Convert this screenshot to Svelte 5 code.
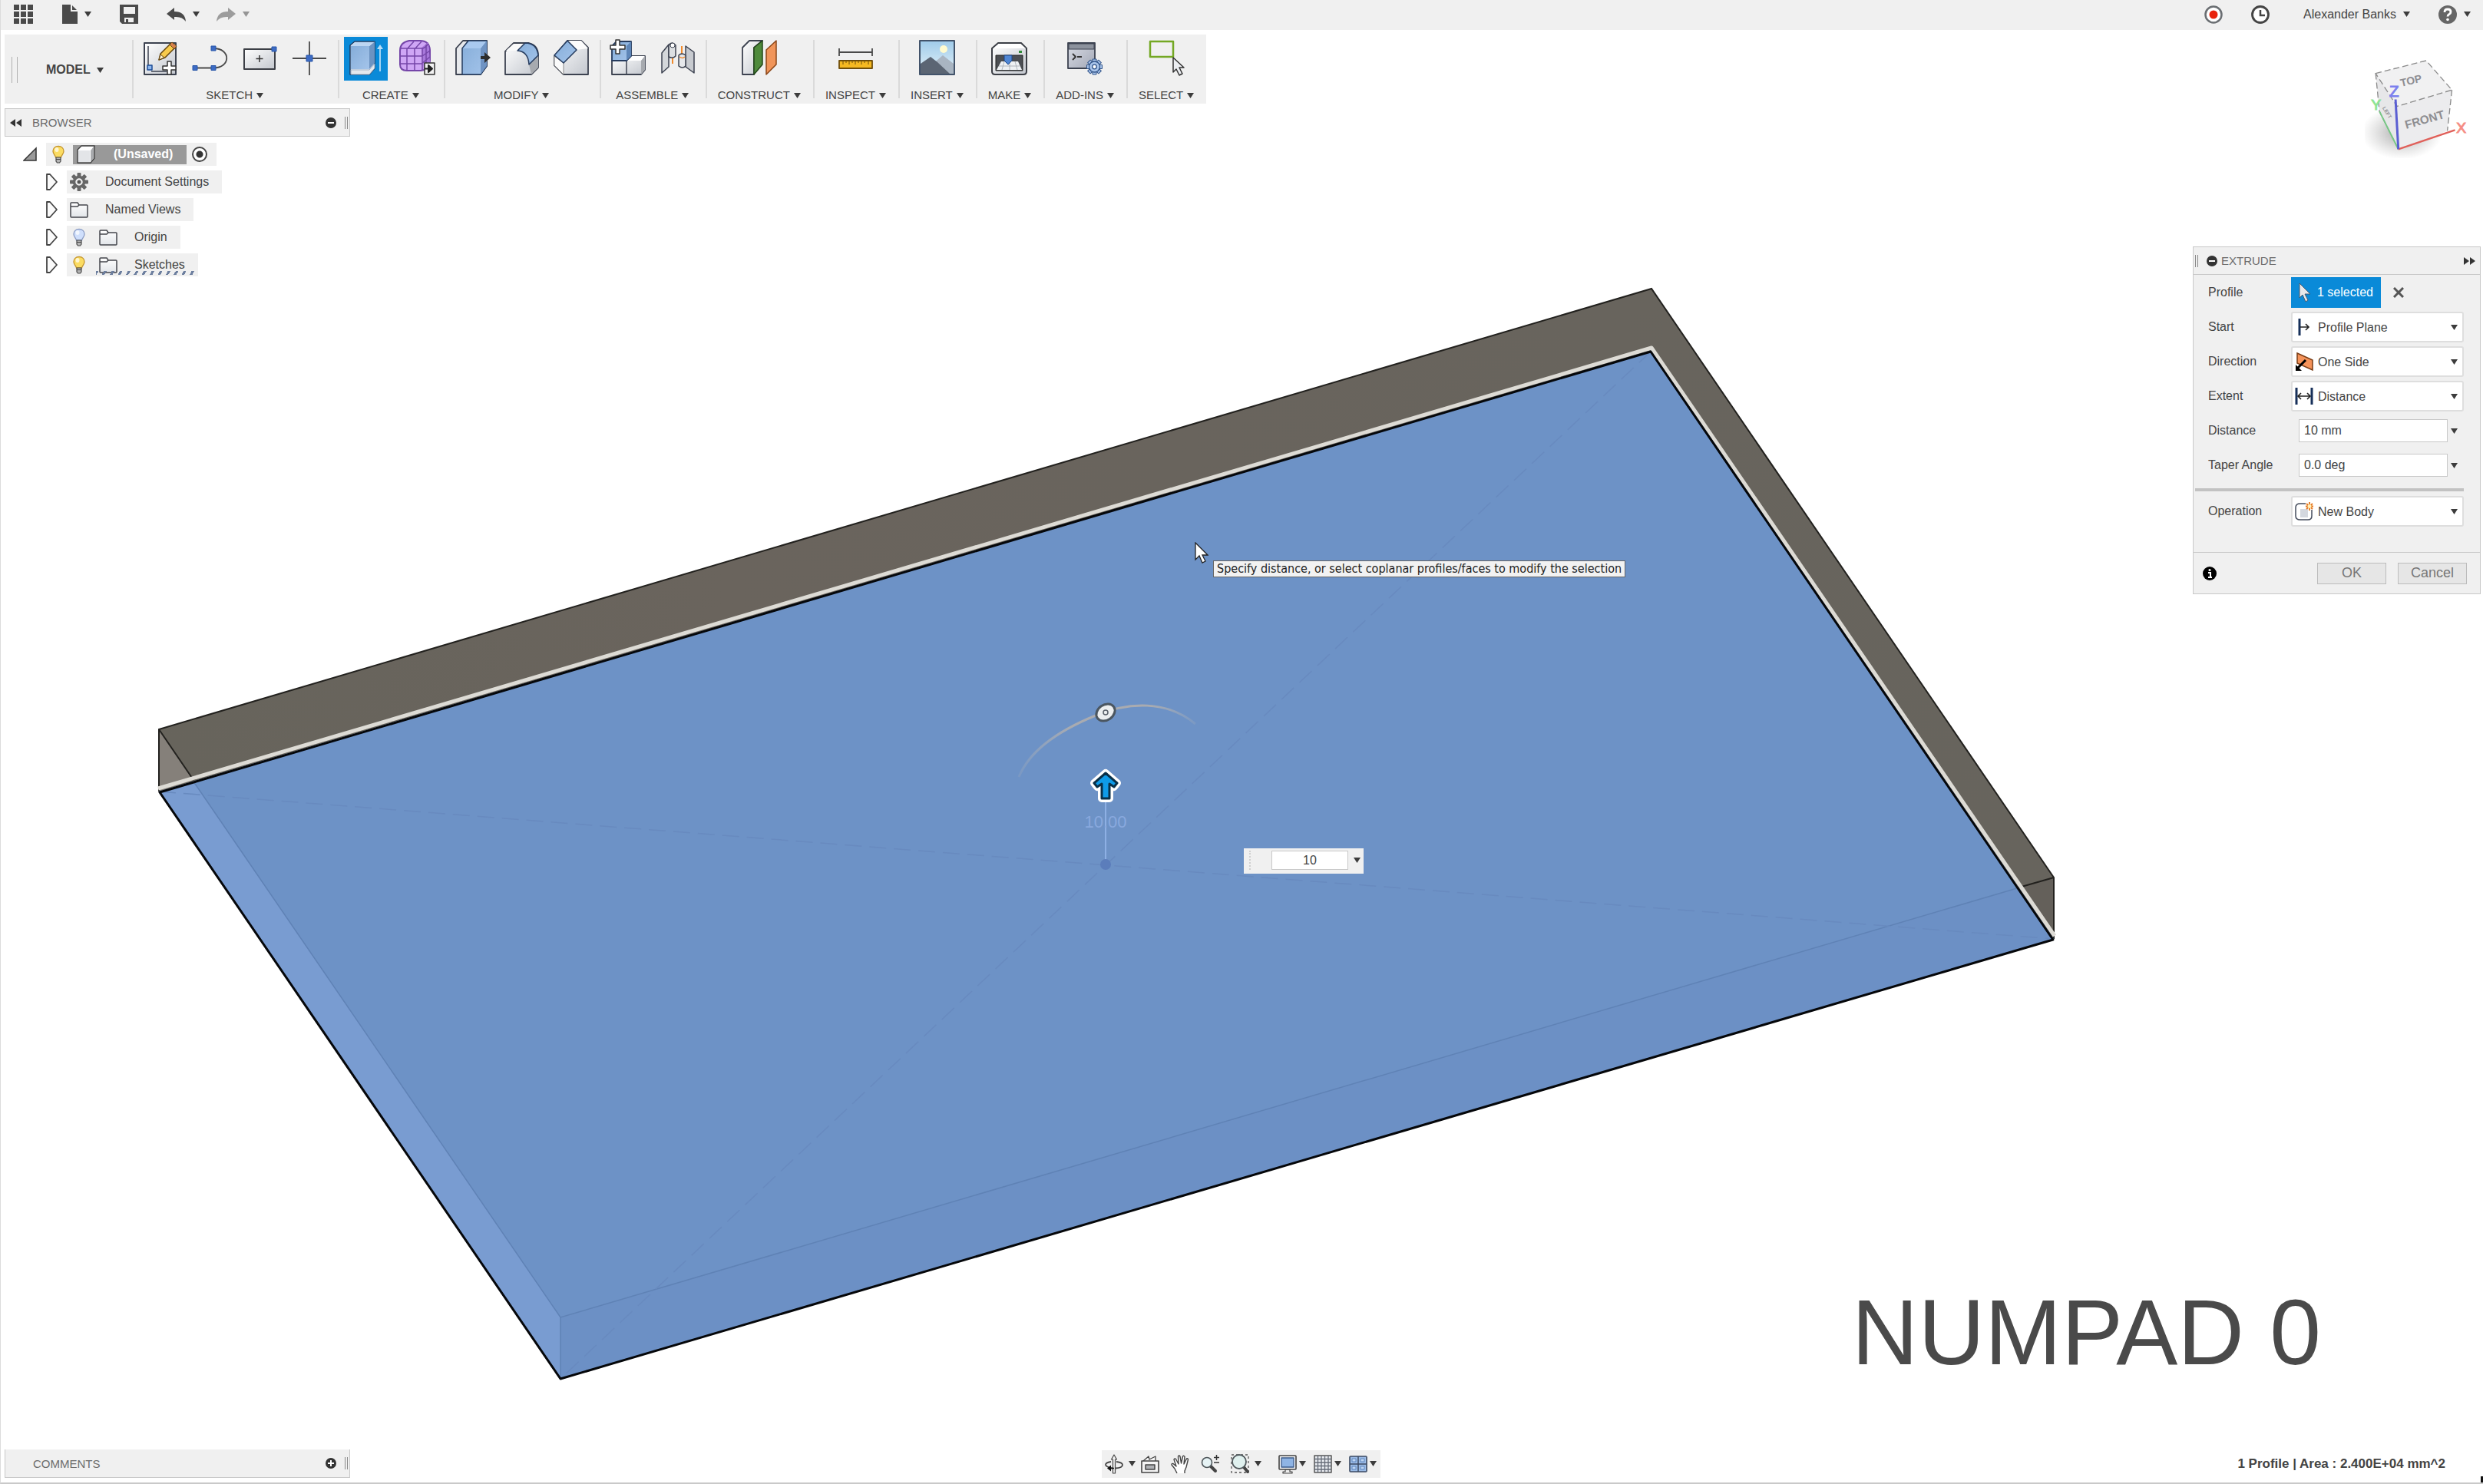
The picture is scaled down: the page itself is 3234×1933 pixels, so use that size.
<script>
  const groups = [
    { label: "SKETCH", tools: ["newSketch", "line", "rectangle", "point"] },
    { label: "CREATE", tools: ["extrude", "form"] },
    { label: "MODIFY", tools: ["pressPull", "fillet", "chamfer"] },
    { label: "ASSEMBLE", tools: ["component", "joint"] },
    { label: "CONSTRUCT", tools: ["plane"] },
    { label: "INSPECT", tools: ["measure"] },
    { label: "INSERT", tools: ["decal"] },
    { label: "MAKE", tools: ["print"] },
    { label: "ADD-INS", tools: ["scripts"] },
    { label: "SELECT", tools: ["select"] },
  ];

  const nodes = [
    { label: "Document Settings", icon: "gear" },
    { label: "Named Views", icon: "folder" },
    { label: "Origin", icon: "folder", bulb: "off" },
    { label: "Sketches", icon: "folder", bulb: "on", dashed: true },
  ];

  const navTools = [
    { name: "orbit", menu: true },
    { name: "lookAt" },
    { name: "pan" },
    { name: "zoom" },
    { name: "fit", menu: true },
    { name: "display", menu: true, compact: true },
    { name: "grid", menu: true, compact: true },
    { name: "viewports", menu: true, compact: true },
  ];

  const teeth = [0, 45, 90, 135, 180, 225, 270, 315];

  let activeTool = $state("extrude");
  let start = $state("Profile Plane");
  let direction = $state("One Side");
  let extent = $state("Distance");
  let operation = $state("New Body");
  let distance = $state("10 mm");
  let taper = $state("0.0 deg");
  let quickValue = $state("10");
</script>

{#snippet caret()}
  <svg class="caret" viewBox="0 0 9 7" aria-hidden="true"><path d="M0 0h9L4.500 7z" /></svg>
{/snippet}

{#snippet bulb(state)}
  <svg class="node-icon" viewBox="0 0 24 24" aria-hidden="true">
    <path d="M12 1.500c-4.500 0-7 3-7 6.500 0 3.500 3 5 3.500 8h7c.5-3 3.500-4.500 3.500-8 0-3.500-2.500-6.500-7-6.500z" fill={state === "on" ? "#fbdc62" : "#cfdffc"} stroke={state === "on" ? "#c4942c" : "#8b9cc4"} stroke-width="1.300" />
    <ellipse cx="10" cy="6" rx="2.500" ry="3" fill="#fff" opacity=".7" />
    <path d="M9 16h6v5l-1.500 2h-3L9 21z" fill="#b5b5b5" stroke="#4a4a4a" stroke-width="1.200" />
    <path d="M9 18.500h6" stroke="#444" />
  </svg>
{/snippet}

{#snippet nodeIcon(name)}
  <svg class="node-icon" viewBox="0 0 24 24" aria-hidden="true">
    {#if name === "gear"}
      {#each teeth as angle}
        <rect x="9.500" y="0" width="5" height="7" rx="1" fill="#666" transform="rotate({angle} 12 12)" />
      {/each}
      <circle cx="12" cy="12" r="6.500" fill="none" stroke="#666" stroke-width="3.500" />
      <circle cx="12" cy="12" r="2.500" fill="#555" />
    {:else if name === "folder"}
      <path d="M1 21V4q0-1 1-1h8l2 3h10q1 0 1 1v14q0 1-1 1H2q-1 0-1-1z" fill="url(#paper)" stroke="#44464c" stroke-width="1.500" />
      <path d="M1 8h9l2-2" fill="none" stroke="#44464c" stroke-width="1.500" />
    {:else}
      <path d="M1 6l5-5h17v16l-5 6H1z" fill="#fff" stroke="#444" stroke-width="1.500" stroke-linejoin="round" />
      <path d="M2 7h15v15H2z" fill="#e3e5e8" />
      <path d="M18 7l4-5v15l-4 5z" fill="#a9abae" />
    {/if}
  </svg>
{/snippet}

{#snippet toolIcon(name)}
  <svg viewBox="0 0 57 57" aria-hidden="true" stroke-linejoin="round">
    {#if name === "newSketch"}
      <rect x="8" y="8" width="41" height="41" fill="url(#steel)" stroke="#3c4250" stroke-width="2" />
      <path d="M13 12v28M17 45h20" stroke="#3c4250" stroke-width="1.500" />
      <rect x="12" y="37" width="6" height="6" fill="#8db7ee" stroke="#1d4c96" stroke-width="1.500" />
      <path d="M27 30l2-8L43 8l6 5-14 14z" fill="#f8cb4c" stroke="#65460e" stroke-width="1.500" />
      <path d="M41 10l3-3 6 5-3 4z" fill="#d8814d" stroke="#65460e" />
      <path d="M27 30l2-7 5 4z" fill="#fff2cf" stroke="#65460e" />
      <path d="M38 32h5v6h6v5h-6v6h-5v-6h-6v-5h6z" fill="#fff" stroke="#333" stroke-width="1.500" />
    {:else if name === "line"}
      <path d="M9 40.500h24c23 0 23-25.500 0-25.500" fill="none" stroke="#4a4a4a" stroke-width="1.800" />
      <path d="M30 12h6v6h-6zM30 37.500h6v6h-6zM6 37.500h6v6H6z" fill="#3c6bc4" stroke="#2856a8" />
    {:else if name === "rectangle"}
      <rect x="8" y="16" width="40" height="26" fill="url(#steel)" stroke="#3c3f46" stroke-width="2" />
      <path d="M28 24v9M23.500 28.500h9" stroke="#333" stroke-width="1.500" />
      <rect x="44" y="13" width="6" height="6" fill="#3c6bc4" stroke="#2856a8" />
    {:else if name === "point"}
      <path d="M28 6v44M6 28h44" stroke="#4a4a4a" stroke-width="1.800" />
      <rect x="24" y="24" width="8" height="8" fill="#3c6bc4" stroke="#2856a8" />
    {:else if name === "extrude"}
      <path d="M8 11l6-5h26v35l-7 8H8z" fill="#dfeaf6" stroke="#1d3c63" stroke-width="1.500" />
      <path d="M9 12h24v30H9z" fill="url(#blue)" />
      <path d="M33 12l7-6v28l-7 8z" fill="#6d93c1" />
      <path d="M9 12l6-5h24l-6 5z" fill="#bdd6f2" />
      <path d="M9 43h24l7-8v6l-7 8H9z" fill="#e4e8ed" stroke="#93a5ba" stroke-width=".8" />
      <path d="M47 45V15" stroke="#b6ddf7" stroke-width="1.800" />
      <path d="M43 16l4-6 4 6z" fill="#b6ddf7" />
    {:else if name === "form"}
      <path d="M8 18Q8 7 20 5h14q12 0 13 12v14q-1 12-12 13H17q-9 0-9-8z" fill="#cfa6f5" stroke="#7546a8" stroke-width="2" />
      <path d="M36 14l9-7 2 26-8 9z" fill="#a878db" />
      <path d="M9 15h28q3 0 8-6M8 25h29l10-7M8 35h28l11-9M17 44V16l9-10M27 44V16l9-10M37 43V15M42 38V10" fill="none" stroke="#7546a8" stroke-width="1.500" />
      <rect x="40" y="34" width="13" height="15" fill="#f3f3f3" stroke="#333" stroke-width="1.500" />
      <path d="M40 41.500h5M45 37l5 4.500-5 4.500z" fill="#222" stroke="#222" stroke-width="2" />
    {:else if name === "pressPull"}
      <path d="M8 15L17 5h31v33L40 49H8z" fill="#e7e9ec" stroke="#3c4250" stroke-width="1.800" />
      <path d="M16 15l8-10h24v33L40 49H16z" fill="url(#blue)" stroke="#253b5e" stroke-width="1.500" />
      <path d="M40 15l8-10v33l-8 11z" fill="#6e93c3" />
      <path d="M17 15l8-9h22l-7 9z" fill="#a9c9ef" />
      <path d="M40 25h5v-5l8 7-8 7v-5h-5z" fill="#2d2d2d" />
    {:else if name === "fillet"}
      <path d="M7 19L18 8h20q12 3 12 16v16l-9 9H7z" fill="url(#steel)" stroke="#3c4250" stroke-width="1.800" />
      <path d="M38 36l12-12v16l-9 9z" fill="#a7aaaf" />
      <path d="M8 18L18 9h14l-9 9z" fill="#fafafa" />
      <path d="M23 18L33 8q15 0 17 16L38 36Q37 19 23 18z" fill="url(#blue)" stroke="#253b5e" stroke-width="1.500" />
    {:else if name === "chamfer"}
      <path d="M6 25L23 5h18l9 9v35H18L6 37z" fill="url(#steel)" stroke="#3c4250" stroke-width="1.800" />
      <path d="M23 5h18l9 10-15 2z" fill="#fcfcfc" />
      <path d="M6 25l12 9v15L6 37z" fill="#fafafa" stroke="#888" />
      <path d="M23 5l12 12-17 17L6 24z" fill="url(#blue)" stroke="#253b5e" stroke-width="1.500" />
    {:else if name === "component"}
      <path d="M8 31h19l5-6h19v18l-5 6H8z" fill="url(#steel)" stroke="#3c4250" stroke-width="1.800" />
      <path d="M27 31h19l5-6H32z" fill="#fff" />
      <path d="M46 31l5-6v18l-5 6z" fill="#a7aaaf" />
      <path d="M27 31v18" stroke="#3c4250" stroke-width="1.500" />
      <path d="M8 12l6-6h19v19l-6 6H8z" fill="url(#blue)" stroke="#253b5e" stroke-width="1.800" />
      <path d="M27 12l6-6v19l-6 6z" fill="#5e86b8" />
      <path d="M13 4h5v7h7v5h-7v6h-5v-6H6v-5h7z" fill="#fff" stroke="#333" stroke-width="1.500" />
    {:else if name === "joint"}
      <path d="M22 24v11M34 12v12" stroke="#f08a2c" stroke-width="2" />
      <path d="M8 21l9-11v29L8 47z" fill="#d4d7da" stroke="#3c4250" stroke-width="1.500" />
      <path d="M17 11q4-6 9 0v14q-4 4-9 1z" fill="#dcdfe2" stroke="#3c4250" stroke-width="1.500" />
      <circle cx="22" cy="11" r="3" fill="#fff" stroke="#3c4250" />
      <path d="M39 12l11 8v27l-11-8z" fill="#c7cacf" stroke="#3c4250" stroke-width="1.500" />
      <path d="M30 24q4-4 9 0v14q-4 4-9 0z" fill="#e6e8eb" stroke="#3c4250" stroke-width="1.500" />
      <path d="M31 26q4 3 7 0" fill="none" stroke="#f08a2c" stroke-width="1.500" />
    {:else if name === "plane"}
      <path d="M7 14l9-9h17L22 14v35H7z" fill="url(#steel)" stroke="#3c4250" stroke-width="1.800" />
      <path d="M22 14L33 5v31L22 49z" fill="#4e8a3c" stroke="#23481a" stroke-width="1.500" />
      <path d="M38 17L51 5v31L38 49z" fill="#f0955a" stroke="#8a4517" stroke-width="1.500" />
    {:else if name === "measure"}
      <path d="M7 20h43M7 15v10M50 15v10" stroke="#4a4a4a" stroke-width="1.800" />
      <rect x="7" y="31" width="43" height="10" fill="#f5b921" stroke="#6f4e0a" stroke-width="1.800" />
      <path d="M12 32v4M16 32v2M20 32v4M24 32v2M28 32v4M32 32v2M36 32v4M40 32v2M45 32v4" stroke="#6f4e0a" />
    {:else if name === "decal"}
      <rect x="6" y="5" width="45" height="44" fill="url(#sky)" stroke="#42536a" stroke-width="2" />
      <circle cx="37" cy="16" r="5" fill="#fffbd0" />
      <path d="M22 48V36l14-12 14 11v13z" fill="#a9b5c2" />
      <path d="M7 35l13-9 9 7 16 15H7z" fill="#5b6573" />
    {:else if name === "print"}
      <path d="M6 15l8-7h30l7 7v30q0 4-4 4H10q-4 0-4-4z" fill="url(#steel)" stroke="#3c3f46" stroke-width="2" />
      <path d="M8 15l7-6h28l7 6z" fill="#fff" />
      <rect x="11" y="24" width="35" height="20" fill="#4b4e53" stroke="#222" />
      <path d="M18 32h22l5 11H12z" fill="#eef1f4" />
      <path d="M15 38h27M22 32l-3 11M29 32v11M36 32l3 11" stroke="#9fa6ad" stroke-width=".8" />
      <path d="M22 24h10v7l-5 5-5-5z" fill="#4f86d4" stroke="#1d4482" />
      <rect x="41" y="18" width="4" height="3" fill="#2f8a37" />
    {:else if name === "scripts"}
      <rect x="6" y="8" width="35" height="33" fill="url(#slate)" stroke="#3c4250" stroke-width="1.800" />
      <rect x="7" y="9" width="33" height="7" fill="#8c929d" stroke="#3c4250" />
      <path d="M12 22l4 4-4 4M18 26h6" fill="none" stroke="#333" stroke-width="1.800" />
      {#each teeth as angle}
        <rect x="38" y="29" width="5" height="6" fill="#a9c4ea" stroke="#31548a" transform="rotate({angle} 40.500 39)" />
      {/each}
      <circle cx="40.500" cy="39" r="7" fill="#a9c4ea" stroke="#31548a" stroke-width="1.300" />
      <circle cx="40.500" cy="39" r="2.800" fill="#fff" stroke="#31548a" stroke-width="1.300" />
    {:else}
      <rect x="7" y="6" width="30" height="20" fill="none" stroke="#74a824" stroke-width="2.500" />
      <path d="M37 27v19l4-4 4 8 4-2-4-8h6z" fill="#eceef2" stroke="#333" stroke-width="1.500" />
    {/if}
  </svg>
{/snippet}

{#snippet navIcon(name)}
  <svg viewBox="0 0 24 26" aria-hidden="true" stroke-linejoin="round">
    {#if name === "orbit"}
      <path d="M8 10Q1 11 1 14q1 3 9 4.500M15 10q8 1 8 4 0 4-9 4.500" fill="none" stroke="#444" stroke-width="1.800" />
      <path d="M10.500 25V7H8.500L12 1l3.500 6h-2v18z" fill="#f4f4f4" stroke="#444" stroke-width="1.200" />
      <path d="M3 18.500l5-4v8z" fill="#111" />
      <path d="M6 18.500h6" stroke="#111" stroke-width="1.500" />
    {:else if name === "lookAt"}
      <path d="M3 9l7-6 1 4 8-4v6" fill="#f8f8f8" stroke="#444" stroke-width="1.300" />
      <rect x="1" y="9" width="22" height="15" fill="#f4f4f4" stroke="#444" stroke-width="1.600" />
      <rect x="6" y="14" width="12" height="6" fill="#aeb0b4" stroke="#444" stroke-width="1.500" />
    {:else if name === "pan"}
      <path d="M8 25l-3-6-4-5q0-2 2-1.500L7 16 4 7q1-2 2.500-.5L10 13 9.500 3q1.200-2 2.500 0l1.500 9L15.500 3q1.500-1.500 2.500.3L17 13l3.500-7q1.800-.8 2 1L20 17l-2 5v3" fill="#fff" stroke="#444" stroke-width="1.400" />
    {:else if name === "zoom"}
      <path d="M13 16l6 6" stroke="#444" stroke-width="4" stroke-linecap="round" />
      <circle cx="8" cy="11" r="6.500" fill="#e6f3f5" stroke="#50585c" stroke-width="1.600" />
      <path d="M20.500 1v7M17 4.500h7M17 11h7" stroke="#333" stroke-width="1.500" />
    {:else if name === "fit"}
      <path d="M1 7V1h22v23H1z" fill="none" stroke="#555" stroke-dasharray="3 3" stroke-width="1.300" />
      <path d="M17 17l5 6" stroke="#444" stroke-width="4" stroke-linecap="round" />
      <circle cx="11" cy="10" r="9" fill="#e0f1ef" stroke="#50585c" stroke-width="1.800" />
    {:else if name === "display"}
      <path d="M9 20h6v3h3v2H6v-2h3z" fill="#eee" stroke="#444" stroke-width="1.200" />
      <rect x="1" y="2" width="22" height="18" rx="1" fill="#f2f2f2" stroke="#444" stroke-width="1.600" />
      <rect x="4" y="5" width="16" height="12" fill="#8fb4e4" stroke="#3d5c8c" stroke-width="1.300" />
    {:else if name === "grid"}
      <rect x="1" y="2" width="22" height="22" fill="#e9ecf1" stroke="#555" stroke-width="1.500" />
      <path d="M5.500 2v22M10 2v22M14.500 2v22M19 2v22M1 6.500h22M1 11h22M1 15.500h22M1 20h22" stroke="#666c78" stroke-width="1.300" />
    {:else}
      <rect x="1" y="3" width="22" height="20" rx="1" fill="#9bbbe6" stroke="#3b4a63" stroke-width="1.600" />
      <path d="M12 3v20M1 13h22" stroke="#3b4a63" stroke-width="1.500" />
      <path d="M4 6h5v4H4zM15 6h5v4h-5zM4 16h5v4H4zM15 16h5v4h-5z" fill="#bcd4f3" stroke="#5f86bd" />
    {/if}
  </svg>
{/snippet}

<svg class="defs" aria-hidden="true">
  <defs>
    <linearGradient id="steel" x1="0" y1="0" x2="1" y2="1"><stop offset="0" stop-color="#fff" /><stop offset="1" stop-color="#c3c7ce" /></linearGradient>
    <linearGradient id="paper" x1="0" y1="0" x2="0" y2="1"><stop offset="0" stop-color="#fff" /><stop offset="1" stop-color="#e2e5e9" /></linearGradient>
    <linearGradient id="slate" x1="0" y1="0" x2="1" y2="1"><stop offset="0" stop-color="#dadde6" /><stop offset="1" stop-color="#a3a8b6" /></linearGradient>
    <linearGradient id="blue" x1="0" y1="0" x2="1" y2="1"><stop offset="0" stop-color="#85add9" /><stop offset="1" stop-color="#a4c4ea" /></linearGradient>
    <linearGradient id="sky" x1="0" y1="0" x2="0" y2="1"><stop offset="0" stop-color="#9fcbea" /><stop offset="1" stop-color="#e5f2f8" /></linearGradient>
  </defs>
</svg>

<div class="app">
  <div class="canvas">
    <svg class="model" viewBox="0 0 3234 1933" preserveAspectRatio="xMidYMid slice" role="img" aria-label="Extrude preview">
      <defs>
        <linearGradient id="wall" x1="0" y1="0" x2="1" y2="0"><stop offset="0" stop-color="#67645c" /><stop offset=".3" stop-color="#6a645d" /><stop offset="1" stop-color="#67645d" /></linearGradient>
        <linearGradient id="arc" x1="0" y1="0" x2="1" y2="0"><stop offset="0" stop-color="#aeb2b8" stop-opacity=".2" /><stop offset=".3" stop-color="#a9abb0" /><stop offset=".75" stop-color="#a9abb0" /><stop offset="1" stop-color="#aeb2b8" stop-opacity=".2" /></linearGradient>
      </defs>
      <path d="M207 950L2151 376 2675 1143V1223L2151 457 207 1031z" fill="url(#wall)" />
      <path d="M207 950l45 66-45 15z" fill="#85807a" />
      <path d="M2675 1143l-49 14 49 66z" fill="#64605a" />
      <path d="M207 1031V950L2151 376 2675 1143v80" fill="none" stroke="#22211e" stroke-width="2" />
      <path d="M207 950l45 66M2675 1143l-49 14" stroke="#22211e" stroke-width="2" />
      <path d="M207 1031L2151 457l524 766L730 1796z" fill="#6d92c6" />
      <path d="M207 1031l45-13 478 698v80z" fill="#799cd1" />
      <path d="M730 1716l1897-559 48 66L730 1796z" fill="#6c90c5" />
      <path d="M252 1018l478 698 1897-559M730 1716v80" fill="none" stroke="#5f82b5" stroke-width="1.500" />
      <path d="M207 1031L2675 1223M2151 457L730 1796" stroke="#688abf" stroke-width="1.500" stroke-dasharray="22 10" />
      <path d="M206 1027L2151 453l525 766" fill="none" stroke="#dddbd5" stroke-width="5" stroke-linejoin="round" />
      <path d="M208 1032L2150 458l524 766L730 1796z" fill="none" stroke="#05070a" stroke-width="3" stroke-linejoin="round" />

      <path d="M1327 1012C1345 968 1400 943 1427 932C1470 914 1520 912 1557 943" fill="none" stroke="url(#arc)" stroke-width="3" />
      <ellipse cx="1440" cy="928" rx="13" ry="10" transform="rotate(-35 1440 928)" fill="#eceeef" stroke="#4b5660" stroke-width="3" />
      <circle cx="1440" cy="928" r="3" fill="none" stroke="#5a6068" stroke-width="1.500" />
      <path d="M1440 1045v81" stroke="#8eb0e4" stroke-width="2" />
      <circle cx="1440" cy="1126" r="7" fill="#5b7dbb" />
      <text class="dimension" x="1440" y="1078">10.00</text>
      <g stroke-linejoin="round">
        <path d="M1440 1007l15 13-4 5-6-4v19h-10v-19l-6 4-4-5z" fill="#fff" stroke="#fff" stroke-width="10" />
        <path d="M1440 1007l15 13-4 5-6-4v19h-10v-19l-6 4-4-5z" fill="#0f9be8" stroke="#0a3048" stroke-width="3" />
      </g>
      <path d="M3231 1923h3v10h-3z" fill="#111" />
    </svg>

    <svg class="pointer" viewBox="0 0 18 28" aria-hidden="true">
      <path d="M1 1v22l5-5 4 9 4-2-4-8h7z" fill="#fff" stroke="#222" stroke-width="1.300" />
    </svg>
    <div class="tooltip" role="tooltip">Specify distance, or select coplanar profiles/faces to modify the selection</div>
    <div class="quick-input">
      <span class="grip-dots"></span>
      <input type="text" aria-label="Distance value" bind:value={quickValue} />
      <button aria-label="Distance options">{@render caret()}</button>
    </div>
    <div class="keystroke">NUMPAD 0</div>

    <svg class="viewcube" viewBox="720 220 420 400" role="img" aria-label="View cube">
      <defs>
        <radialGradient id="shade"><stop offset="0" stop-color="#888" stop-opacity=".75" /><stop offset="1" stop-color="#aaa" stop-opacity="0" /></radialGradient>
      </defs>
      <ellipse cx="865" cy="520" rx="160" ry="105" fill="url(#shade)" />
      <path d="M762 288l198-50 101 115-215 64z" fill="#f1f1f2" />
      <path d="M762 288l84 129 5 168-74-148z" fill="#e7e7e9" />
      <path d="M846 417l215-64-18 160-192 72z" fill="#ececee" />
      <path d="M762 288l198-50 101 115-215 64zM762 288l15 149 74 148M1061 353l-18 160" fill="none" stroke="#8b8b8b" stroke-width="4" stroke-dasharray="24 12" />
      <text class="face" transform="translate(862 340) rotate(-13)" font-size="42">TOP</text>
      <text class="face" transform="translate(882 506) rotate(-16)" font-size="46">FRONT</text>
      <text class="face" transform="translate(788 424) rotate(58)" font-size="20">LEFT</text>
      <path d="M851 585l-74-148" stroke="#76c884" stroke-width="6" />
      <path d="M851 585l222-75" stroke="#e0605a" stroke-width="7" />
      <path d="M851 585l-11-195" stroke="#5a5ed2" stroke-width="9" />
      <text class="axis" x="816" y="380" font-size="62" fill="#7c80ee" stroke="#7c80ee">Z</text>
      <text class="axis" x="744" y="430" font-size="58" fill="#8ee594" stroke="#8ee594">Y</text>
      <text class="axis" x="1078" y="520" font-size="58" fill="#f58d84" stroke="#f58d84">X</text>
    </svg>
  </div>

  <header class="topbar">
    <button aria-label="Show data panel">
      <svg width="27" height="27" viewBox="0 0 27 27"><path d="M1 1h7v7H1zM10 1h7v7h-7zM19 1h7v7h-7zM1 10h7v7H1zM10 10h7v7h-7zM19 10h7v7h-7zM1 19h7v7H1zM10 19h7v7h-7zM19 19h7v7h-7z" /></svg>
    </button>
    <button aria-label="File">
      <svg width="20" height="25" viewBox="0 0 20 25"><path d="M0 0h11v9h9v16H0zM13 1l6 6h-6z" /></svg>
      {@render caret()}
    </button>
    <button aria-label="Save">
      <svg width="24" height="25" viewBox="0 0 24 25"><path d="M0 0h24v25H3l-3-3z" /><path d="M5 3h15v9H5zM6 17h12v6H6z" fill="#efefef" /><path d="M8 19h3v4H8z" /></svg>
    </button>
    <div class="history">
      <button aria-label="Undo">
        <svg width="25" height="18" viewBox="0 0 25 18"><path d="M0 8l10-8v5q14 0 15 13-5-7-15-6v4z" /></svg>
        {@render caret()}
      </button>
      <button aria-label="Redo" class="faded">
        <svg width="25" height="18" viewBox="0 0 25 18"><path d="M25 8L15 0v5Q1 5 0 18q5-7 15-6v4z" /></svg>
        {@render caret()}
      </button>
    </div>
    <div class="account">
      <button aria-label="Record">
        <svg width="24" height="24" viewBox="0 0 24 24"><circle cx="12" cy="12" r="10.500" fill="#fff" stroke="#6a6e72" stroke-width="2.500" /><circle cx="12" cy="12" r="5.500" fill="#e8220c" /></svg>
      </button>
      <button aria-label="Job status">
        <svg width="24" height="24" viewBox="0 0 24 24"><circle cx="12" cy="12" r="10.500" fill="#fff" stroke="#444" stroke-width="2.800" /><path d="M12 6v7h6" fill="none" stroke="#444" stroke-width="2.500" /></svg>
      </button>
      <button class="user">Alexander Banks {@render caret()}</button>
      <button aria-label="Help">
        <svg width="24" height="24" viewBox="0 0 24 24"><circle cx="12" cy="12" r="12" fill="#666" /><path d="M8 9q0-4 4-4t4 3.500q0 2-2 3-2 1-2 3" fill="none" stroke="#fff" stroke-width="2.800" /><circle cx="12" cy="18.500" r="1.800" fill="#fff" /></svg>
        {@render caret()}
      </button>
    </div>
  </header>

  <nav class="toolbar" aria-label="Tools">
    <button class="workspace-menu"><span class="grip"></span><b>MODEL</b>{@render caret()}</button>
    {#each groups as group}
      <div class="group">
        <div class="tools">
          {#each group.tools as tool}
            <button class="tool" class:active={tool === activeTool} aria-label={tool} onclick={() => (activeTool = tool)}>
              {@render toolIcon(tool)}
            </button>
          {/each}
        </div>
        <button class="group-label">{group.label}{@render caret()}</button>
      </div>
    {/each}
  </nav>

  <main>
    <aside class="browser">
      <div class="bar">
        <button aria-label="Collapse browser">
          <svg width="15" height="10" viewBox="0 0 15 10"><path d="M7 0v10L0 5zM15 0v10L8 5z" /></svg>
        </button>
        <h2>BROWSER</h2>
        <button aria-label="Minimise">
          <svg width="14" height="14" viewBox="0 0 14 14"><circle cx="7" cy="7" r="7" /><path d="M3 7h8" stroke="#fff" stroke-width="2" /></svg>
        </button>
        <span class="grip small"></span>
      </div>
      <ul class="tree">
        <li class="root">
          <svg class="twist" viewBox="0 0 18 18" aria-hidden="true"><path d="M17 1v16H1z" fill="#999" stroke="#333" stroke-width="1.500" /></svg>
          <div class="node">
            {@render bulb("on")}
            <span class="document">{@render nodeIcon("body")}(Unsaved)</span>
            <input type="radio" name="active" aria-label="Activate component" checked />
          </div>
        </li>
        {#each nodes as node}
          <li>
            <svg class="twist" viewBox="0 0 18 22" aria-hidden="true"><path d="M2 1h4l9 10-9 10H2z" fill="#fafafa" stroke="#444" stroke-width="1.800" stroke-linejoin="round" /></svg>
            <div class="node">
              {#if node.bulb}{@render bulb(node.bulb)}{/if}
              <span class="entry" class:dashed={node.dashed}>{@render nodeIcon(node.icon)}{node.label}</span>
            </div>
          </li>
        {/each}
      </ul>
    </aside>

    <form class="dialog" onsubmit={(e) => e.preventDefault()}>
      <div class="dialog-head">
        <span class="grip small"></span>
        <svg width="14" height="14" viewBox="0 0 14 14" aria-hidden="true"><circle cx="7" cy="7" r="7" /><path d="M3 7h8" stroke="#fff" stroke-width="2" /></svg>
        <h2>EXTRUDE</h2>
        <button type="button" aria-label="Dock dialog">
          <svg width="15" height="10" viewBox="0 0 15 10"><path d="M0 0v10l7-5zM8 0v10l7-5z" /></svg>
        </button>
      </div>
      <div class="fields">
        <div class="field">
          <label for="profile">Profile</label>
          <button type="button" id="profile" class="selection">
            <svg width="16" height="26" viewBox="0 0 16 26" aria-hidden="true"><path d="M1 1v19l4-4 4 9 3-2-4-8h7z" fill="#e8e8ea" stroke="#47596d" /></svg>
            1 selected
          </button>
          <button type="button" class="clear" aria-label="Clear selection">
            <svg width="14" height="14" viewBox="0 0 14 14"><path d="M1 1l12 12M13 1L1 13" stroke="#555" stroke-width="3" /></svg>
          </button>
        </div>
        <div class="field">
          <label for="start">Start</label>
          <div class="dropdown">
            <svg width="24" height="24" viewBox="0 0 24 24" aria-hidden="true"><path d="M6 1v22" stroke="#17305a" stroke-width="3" /><path d="M7 12h11M14 8l4 4-4 4" fill="none" stroke="#222" stroke-width="1.600" /></svg>
            <select id="start" bind:value={start}><option>Profile Plane</option><option>Offset Plane</option><option>From Object</option></select>
            {@render caret()}
          </div>
        </div>
        <div class="field">
          <label for="direction">Direction</label>
          <div class="dropdown">
            <svg width="24" height="24" viewBox="0 0 24 24" aria-hidden="true"><path d="M3 1l20 9v13L3 14z" fill="#f5935a" stroke="#7a3c14" stroke-width="1.500" /><path d="M14 10L4 20" stroke="#000" stroke-width="3" /><path d="M1 24v-8l8 8z" /></svg>
            <select id="direction" bind:value={direction}><option>One Side</option><option>Two Sides</option><option>Symmetric</option></select>
            {@render caret()}
          </div>
        </div>
        <div class="field">
          <label for="extent">Extent</label>
          <div class="dropdown">
            <svg width="24" height="24" viewBox="0 0 24 24" aria-hidden="true"><path d="M2 1v22M22 1v22" stroke="#17305a" stroke-width="3" /><path d="M4 12h16M8 8l-4 4 4 4M16 8l4 4-4 4" fill="none" stroke="#222" stroke-width="1.600" /></svg>
            <select id="extent" bind:value={extent}><option>Distance</option><option>To Object</option><option>All</option></select>
            {@render caret()}
          </div>
        </div>
        <div class="field">
          <label for="distance">Distance</label>
          <input id="distance" type="text" bind:value={distance} />
          {@render caret()}
        </div>
        <div class="field">
          <label for="taper">Taper Angle</label>
          <input id="taper" type="text" bind:value={taper} />
          {@render caret()}
        </div>
        <hr />
        <div class="field">
          <label for="operation">Operation</label>
          <div class="dropdown">
            <svg width="24" height="24" viewBox="0 0 24 24" aria-hidden="true"><path d="M14 2H7Q1 2 1 7v11q0 5 6 5h10q5 0 5-5V10" fill="#fff" stroke="#444c5c" stroke-width="1.500" /><path d="M7 9h10v11H7z" fill="#d4d8df" /><path d="M19 0v11M14 5.500h10M15 2l8 7M23 2l-8 7" stroke="#e5761c" stroke-width="1.800" /><circle cx="19" cy="5.500" r="2.500" fill="#fff0b8" /></svg>
            <select id="operation" bind:value={operation}><option>New Body</option><option>Join</option><option>Cut</option><option>Intersect</option></select>
            {@render caret()}
          </div>
        </div>
      </div>
      <div class="actions">
        <svg width="18" height="18" viewBox="0 0 18 18" aria-hidden="true"><circle cx="9" cy="9" r="9" /><path d="M7 8h3v6M7 14h5" fill="none" stroke="#fff" stroke-width="2" /><circle cx="9" cy="4.500" r="1.500" fill="#fff" /></svg>
        <button type="submit">OK</button>
        <button type="button">Cancel</button>
      </div>
    </form>
  </main>

  <footer>
    <div class="bar comments">
      <h2>COMMENTS</h2>
      <button aria-label="Expand comments">
        <svg width="14" height="14" viewBox="0 0 14 14"><circle cx="7" cy="7" r="7" /><path d="M3 7h8M7 3v8" stroke="#fff" stroke-width="2" /></svg>
      </button>
      <span class="grip small"></span>
    </div>
    <div class="navbar">
      {#each navTools as tool}
        <button class:compact={tool.compact} class:wide={tool.name === "orbit"} class:split={tool.name === "display"} aria-label={tool.name}>
          {@render navIcon(tool.name)}
          {#if tool.menu}{@render caret()}{/if}
        </button>
      {/each}
    </div>
    <div class="status">1 Profile | Area : 2.400E+04 mm^2</div>
  </footer>
</div>

<style>
  :global(body) {
    margin: 0;
    background: #fff;
  }

  * {
    box-sizing: border-box;
  }

  .app {
    --panel: #f0f0f0;
    --edge: #c8c8c8;
    --text: #444;
    --accent: #0a8ad8;
    position: relative;
    display: flex;
    flex-direction: column;
    min-height: 100vh;
    overflow: hidden;
    border-left: 1px solid #dcdcdc;
    border-bottom: 2px solid #c9c9c9;
    font-family: "Liberation Sans", Arial, sans-serif;
    font-size: 16px;
    color: var(--text);
  }

  .defs {
    position: absolute;
    width: 0;
    height: 0;
  }

  svg {
    display: block;
    flex: none;
  }

  button {
    display: flex;
    align-items: center;
    padding: 0;
    border: none;
    background: none;
    color: inherit;
    font: inherit;
    fill: #4a4a4a;
    cursor: pointer;
  }

  h2 {
    margin: 0;
    font-size: 15px;
    font-weight: normal;
    color: #6c6c6c;
  }

  .caret {
    width: 9px;
    height: 7px;
    fill: #3c3c3c;
  }

  .grip {
    width: 8px;
    height: 34px;
    border: 1px solid #b0b0b0;
    border-width: 0 1px;
  }

  .grip.small {
    width: 4px;
    height: 16px;
    border-color: #888;
  }

  /* drawing area, lies behind the panels and under the window edge */
  .canvas {
    position: absolute;
    inset: 0 0 -2px -1px;
  }

  .model {
    width: 100%;
    height: 100%;
  }

  .dimension {
    font-size: 22px;
    fill: #89a9de;
    text-anchor: middle;
  }

  .pointer {
    position: absolute;
    left: 1556px;
    top: 706px;
    width: 18px;
    height: 28px;
  }

  .tooltip {
    position: absolute;
    left: 1580px;
    top: 730px;
    padding: 0 4px;
    border: 1px solid #666;
    background: #f2f2f2;
    color: #222;
    font-family: "DejaVu Sans Condensed", "Noto Sans", sans-serif;
    font-size: 16px;
    line-height: 20px;
    white-space: nowrap;
  }

  .quick-input {
    position: absolute;
    left: 1620px;
    top: 1105px;
    display: flex;
    align-items: center;
    gap: 7px;
    padding: 3px 4px 5px 7px;
    background: var(--panel);
  }

  .quick-input input {
    width: 100px;
    height: 25px;
    margin-left: 20px;
    border: 1px solid var(--edge);
    padding: 0;
    text-align: center;
    font: inherit;
    color: inherit;
  }

  .grip-dots {
    height: 25px;
    border-left: 2px dotted #d0d0d0;
  }

  .keystroke {
    position: absolute;
    right: 211px;
    bottom: 138px;
    font-size: 120px;
    line-height: 120px;
    color: #4a4a4a;
  }

  .viewcube {
    position: absolute;
    right: 14px;
    top: 73px;
    width: 140px;
    height: 133px;
  }

  .face {
    fill: #8e8e92;
    font-weight: bold;
  }

  .axis {
    stroke-width: 3;
  }

  header,
  nav,
  main,
  footer {
    position: relative;
  }

  .topbar {
    display: flex;
    align-items: center;
    gap: 37px;
    height: 39px;
    padding: 0 16px 2px;
    background: var(--panel);
  }

  .topbar button {
    gap: 9px;
  }

  .history {
    display: flex;
    gap: 22px;
  }

  .faded {
    opacity: 0.5;
  }

  .account {
    display: flex;
    align-items: center;
    gap: 37px;
    margin-left: auto;
  }

  .account .user {
    margin-left: 7px;
  }

  .toolbar {
    display: flex;
    align-self: flex-start;
    height: 90px;
    margin: 6px 0 0 5px;
    background: var(--panel);
  }

  .workspace-menu {
    padding: 2px 37px 0 9px;
  }

  .workspace-menu b {
    margin: 0 8px 0 37px;
    font-size: 16px;
    font-weight: bold;
  }

  .group {
    position: relative;
    display: flex;
    flex-direction: column;
    align-items: center;
    padding: 3px 4px 0;
  }

  /* rule between tool groups */
  .group::before {
    content: "";
    position: absolute;
    left: 0;
    top: 7px;
    bottom: 7px;
    border-left: 2px solid #dadada;
  }

  .tools {
    display: flex;
    gap: 8px;
    padding: 0 4px;
  }

  .tool {
    width: 57px;
    height: 57px;
  }

  .tool.active {
    background: var(--accent);
  }

  .tool svg {
    width: 57px;
    height: 57px;
  }

  .group-label {
    gap: 5px;
    padding: 10px 12px 0;
    font-size: 15px;
    line-height: 18px;
  }

  main {
    display: flex;
    align-items: flex-start;
    justify-content: space-between;
    flex: 1;
  }

  .browser {
    margin: 6px 0 0 5px;
  }

  .bar {
    display: flex;
    align-items: center;
    width: 450px;
    height: 37px;
    padding: 0 2px 0 6px;
    border: 1px solid var(--edge);
    background: var(--panel);
  }

  .bar h2 {
    flex: 1;
    margin-left: 14px;
  }

  .bar .grip {
    margin-left: 11px;
  }

  .bar button,
  .dialog-head button {
    fill: #333;
  }

  .tree {
    display: flex;
    flex-direction: column;
    gap: 6px;
    margin: 0;
    padding: 8px 0 0 53px;
    list-style: none;
  }

  .tree li {
    display: flex;
    align-items: center;
    gap: 10px;
  }

  .tree .root {
    margin-left: -29px;
    gap: 12px;
  }

  .twist {
    width: 18px;
    height: 22px;
  }

  .node {
    display: flex;
    align-items: center;
    gap: 14px;
    height: 30px;
    padding: 0 17px 0 4px;
    background: var(--panel);
  }

  .root .node {
    gap: 7px;
    padding-right: 12px;
  }

  .node-icon {
    width: 24px;
    height: 24px;
  }

  .entry {
    display: flex;
    align-items: center;
    gap: 22px;
    height: 30px;
  }

  .dashed {
    position: relative;
  }

  .dashed::after {
    content: "";
    position: absolute;
    left: -4px;
    right: -14px;
    bottom: 2px;
    height: 5px;
    background: repeating-linear-gradient(120deg, #6d7f9f 0 3px, transparent 3px 9px);
  }

  .document {
    display: flex;
    align-items: center;
    gap: 24px;
    height: 25px;
    padding: 0 18px 0 5px;
    background: #999;
    color: #fff;
    font-weight: bold;
  }

  .node input {
    appearance: none;
    width: 20px;
    height: 20px;
    margin: 0;
    border: 2px solid #444;
    border-radius: 50%;
    background: radial-gradient(#333 0 4px, #fff 5px);
  }

  .dialog {
    width: 375px;
    margin: 186px 3px 0 0;
    border: 1px solid var(--edge);
    background: var(--panel);
  }

  .dialog-head {
    display: flex;
    align-items: center;
    height: 36px;
    padding: 0 6px 0 2px;
    border-bottom: 1px solid var(--edge);
    fill: #333;
  }

  .dialog-head h2 {
    flex: 1;
    margin-left: 5px;
  }

  .dialog-head .grip {
    margin-right: 11px;
  }

  .fields {
    display: flex;
    flex-direction: column;
    gap: 5px;
    padding: 3px 21px 33px 2px;
  }

  .field {
    display: flex;
    align-items: center;
    height: 40px;
  }

  .field label {
    width: 109px;
    padding-left: 17px;
    margin-right: 16px;
    white-space: nowrap;
  }

  .field > input {
    flex: 1;
    min-width: 0;
    height: 30px;
    margin-left: 10px;
    padding: 0 6px;
    border: 1px solid var(--edge);
    background: #fff;
    font: inherit;
    color: inherit;
  }

  .field > .caret {
    margin: 0 8px 0 4px;
  }

  .selection {
    gap: 8px;
    height: 40px;
    padding: 0 10px;
    background: var(--accent);
    color: #fff;
  }

  .clear {
    margin-left: 16px;
  }

  .dropdown {
    display: flex;
    align-items: center;
    flex: 1;
    height: 40px;
    padding: 0 6px 0 3px;
    border: 2px solid #dedede;
    border-radius: 3px;
    background: #fff;
  }

  .dropdown select {
    flex: 1;
    min-width: 0;
    margin-left: 6px;
    padding: 0;
    border: none;
    appearance: none;
    background: none;
    font: inherit;
    color: inherit;
  }

  hr {
    width: 100%;
    height: 4px;
    margin: 5px 0 1px;
    border: none;
    background: #c2c2c2;
  }

  .actions {
    display: flex;
    align-items: center;
    gap: 15px;
    height: 54px;
    padding: 0 17px 0 12px;
    border-top: 1px solid var(--edge);
    fill: #000;
  }

  .actions svg {
    margin-right: auto;
  }

  .actions button {
    justify-content: center;
    width: 90px;
    height: 28px;
    border: 1px solid #bcbcbc;
    background: #e6e6e6;
    color: #777;
    font-size: 18px;
  }

  footer {
    display: grid;
    grid-template-columns: 1fr auto 1fr;
    align-items: center;
    padding: 0 49px 6px 5px;
  }

  .comments {
    border-top: none;
  }

  .comments h2 {
    margin-left: 30px;
  }

  .navbar {
    display: flex;
    height: 36px;
    margin-left: 42px;
    background: var(--panel);
  }

  .navbar button {
    gap: 7px;
    padding: 0 8px 0 7px;
  }

  .navbar .wide {
    padding: 0 0 0 4px;
  }

  .navbar .compact {
    gap: 3px;
    padding: 0 5px;
  }

  .navbar .split {
    margin-left: 9px;
  }

  .navbar svg:first-child {
    width: 24px;
    height: 26px;
  }

  .status {
    justify-self: end;
    font-size: 17px;
    font-weight: bold;
  }
</style>
